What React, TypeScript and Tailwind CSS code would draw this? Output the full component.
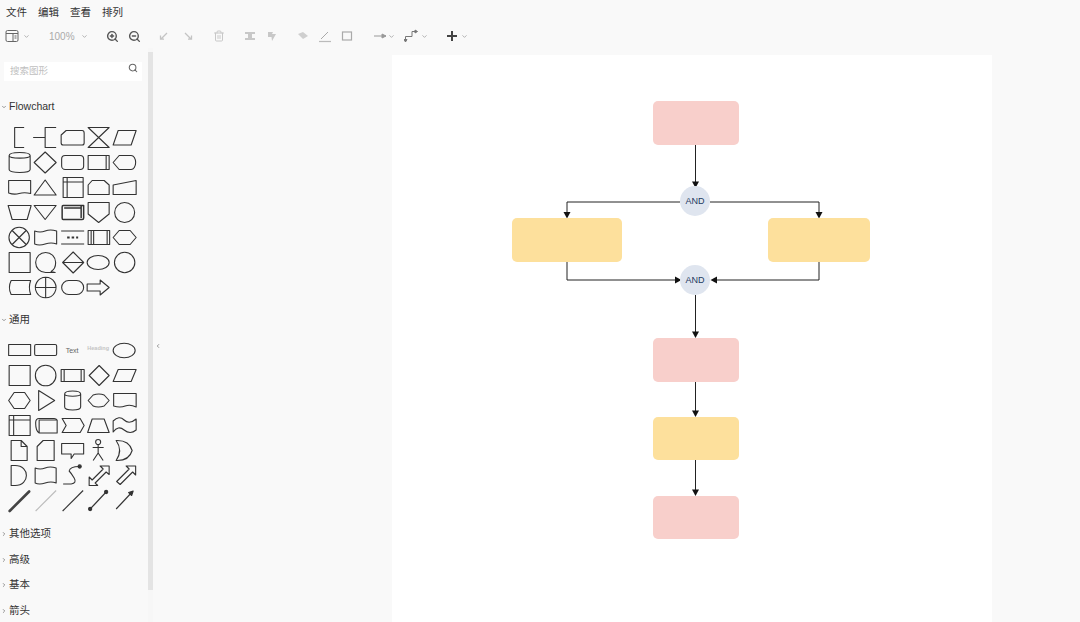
import React from "react";
import { ZoomIn, ZoomOut, Search, ChevronDown, ChevronRight, Trash2 } from "lucide-react";

const S = ({ children }: { children?: React.ReactNode }) => (
  <svg viewBox="0 0 26 25" className="w-[26.3px] h-[25px]" fill="none" stroke="#333" strokeWidth="1.1" strokeLinejoin="round">
    {children}
  </svg>
);

const flow: React.ReactNode[] = [
  <path d="M18 2.5H8.5V22.5H18" />,
  <path d="M1 12.5H13M24 2.5H13V22.5H24" />,
  <path d="M7 5.5H23Q25 5.5 25 8V18Q25 20 23 20H4Q2 20 2 18V10Z" />,
  <path d="M3 2.5H24L3 22.5H24Z" />,
  <path d="M7 5.5H25L20 20H2Z" />,

  <path d="M3 5.5C3 1.5 24 1.5 24 5.5V19.5C24 23.5 3 23.5 3 19.5ZM3 5.5C3 9 24 9 24 5.5" />,
  <path d="M13 2L24 12.5L13 23L2 12.5Z" />,
  <rect x="2.5" y="5.5" width="22" height="14" rx="3.5" />,
  <path d="M3 5.5H24V19.5H3ZM21 5.5V19.5" />,
  <path d="M2 12.5L8 5.5H20A4.5 7 0 0 1 20 19.5H8Z" />,

  <path d="M2.5 5.5H24.5V18.5Q18 17 13 18.5T2.5 18Z" />,
  <path d="M13 5L24 20H2Z" />,
  <path d="M4 2.5H24V22.5H4ZM8 2.5V22.5M4 7H24" />,
  <path d="M7 5.5H19L24 10V19.5H3V10Z" />,
  <path d="M2 10L25 5.5V19.5H2Z" />,

  <path d="M2 5.5H25L21 19.5H6Z" />,
  <path d="M2 5.5H24L13 19.5Z" />,
  <path d="M4 5.5H24.5V18Q24.5 19.5 23 19.5H4Q3 19.5 3 18V7Q3 5.5 4 5.5ZM5 8H22V18M22 5.5V18" strokeWidth="1.5" />,
  <path d="M3 2.5H24V14L13.5 22.5L3 14Z" />,
  <circle cx="13.5" cy="12.5" r="10" />,

  <g><circle cx="13" cy="12.5" r="10.2" /><path d="M6 5.5L20 19.5M20 5.5L6 19.5" strokeWidth="1.2" /></g>,
  <path d="M2.5 6Q8 8 13 6T24.5 6V19Q19 17 13 19T2.5 19Z" />,
  <g><path d="M2 6H25M2 19H25" /><path d="M8 12.5H19" strokeDasharray="2.5 2" strokeWidth="2" /></g>,
  <path d="M3 5.5H24.5V19.5H3ZM6 5.5V19.5M8.5 5.5V19.5M22 5.5V19.5" />,
  <path d="M2 12.5L8 5.5H19L25 12.5L19 19.5H8Z" />,

  <rect x="3" y="2.5" width="21" height="20" />,
  <path d="M13.5 22.5A10 10 0 1 1 23.5 12.5Q23.5 19 19 21.5L23 22.5Z" />,
  <path d="M14 2L24.5 12.5L14 23L3.5 12.5ZM3.5 12.5H24.5" />,
  <ellipse cx="13" cy="12.5" rx="11" ry="7" />,
  <circle cx="13.5" cy="12.5" r="10.2" />,

  <path d="M5 5.5H24.5Q22 12.5 24.5 19.5H5Q1.5 12.5 5 5.5Z" />,
  <path d="M13.5 2.2A10.3 10.3 0 1 0 13.6 2.2ZM13.5 2.2V22.8M3.2 12.5H23.8" />,
  <rect x="2.5" y="5.5" width="22" height="14" rx="7" />,
  <path d="M2 9H15V5L24 12.5L15 20V16H2Z" />,
];

const general: React.ReactNode[] = [
  <rect x="2.5" y="6.5" width="22" height="11" />,
  <rect x="2.5" y="6.5" width="22" height="11" rx="1.5" />,
  <text x="13" y="15" fontSize="7" textAnchor="middle" fill="#666" stroke="none" fontFamily="Liberation Sans, sans-serif">Text</text>,
  <text x="13" y="11.5" fontSize="5.5" fontWeight="700" textAnchor="middle" fill="#c4c4c4" stroke="none" fontFamily="Liberation Sans, sans-serif">Heading</text>,
  <ellipse cx="13" cy="12.5" rx="11" ry="7.2" />,

  <rect x="3" y="2.5" width="21" height="20" />,
  <circle cx="13.5" cy="12.5" r="10.3" />,
  <path d="M2 6.5H25V18.5H2ZM5 6.5V18.5M22 6.5V18.5" />,
  <path d="M14 2.5L24 12.5L14 22.5L4 12.5Z" />,
  <path d="M7 6.5H25L20 18.5H2Z" />,

  <path d="M2.5 12.5L8 4.500H18.5L24 12.5L18.5 20.5H8Z" />,
  <path d="M6.5 2.5L22.5 12.5L6.5 22.5Z" />,
  <path d="M5.5 6C5.5 2 21.5 2 21.5 6V19C21.5 23 5.5 23 5.5 19ZM5.5 6C5.5 9 21.5 9 21.5 6" />,
  <path d="M3 12.5L8 7Q14 5 19 7L24 12.5L19 18Q13 20 8 18Z" />,
  <path d="M2.5 5.5H25V19Q19 16 14 18T2.5 18Z" />,

  <path d="M3 2.5H24V22.5H3ZM7.5 2.5V22.5M3 7H24" />,
  <path d="M7 7H25V20H7ZM7 7V20M3.5 10Q3.5 5.5 7 5.5H22Q24 5.5 25 7M3.5 10Q3.5 18 7 20" />,
  <path d="M3 5.5H21L25 12.5L21 19.5H3L7 12.5Z" />,
  <path d="M7 6H19L24 19.5H2.5Z" />,
  <path d="M2 8Q8 2 13 7T25 6V17Q19 22 13 17T2 19Z" />,

  <path d="M5 2.5H15L21 8.5V22.5H5ZM15 2.5V8.5H21" />,
  <path d="M11 2.5H22V22.5H5V8.5Z" />,
  <path d="M2.5 5.5H24.5V16H15L12 20.5V16H2.5Z" />,
  <path d="M13 6.5A2.5 2.5 0 1 0 13 1.5A2.5 2.5 0 1 0 13 6.5ZM13 6.5V15M7.5 9.5H18.5M13 15L8 22.5M13 15L18 22.5" />,
  <path d="M5 2.5Q18 2 21 12.5Q18 23 5 22.5Q12 12.5 5 2.5Z" />,

  <path d="M5 2.5H9C24 2.5 24 22.5 9 22.5H5Z" />,
  <path d="M3 5Q8 7 13 5T24 5V20Q19 18 13 20T3 20Z" />,
  <g><path d="M4 21H12Q18 20 15 15T10 8Q11 3.5 20 3.5" /><circle cx="20.5" cy="3.5" r="1.6" fill="#333" /></g>,
  <path d="M4 22.5V14L7 17L18 6L15 3H24V11.5L21 9L10 20L12.5 22.5Z" />,
  <path d="M5.5 18.5L18 6L15 3H24.5V12L21.5 9L9 21.5Z" />,

  <path d="M3.5 23L23 3.5" stroke="#444" strokeWidth="2.6" strokeLinecap="round" />,
  <path d="M3.5 23L24 2.5" stroke="#bbb" />,
  <path d="M3.5 23L24 2.5" />,
  <g fill="#333"><path d="M5 21L21 4" /><circle cx="5" cy="21" r="1.6" /><circle cx="21" cy="4" r="1.6" /></g>,
  <g fill="#333"><path d="M5 21L21 4" /><path d="M22 3L20.5 7.5L17.5 4.5Z" /></g>,
];

const Caret = ({ className = "" }: { className?: string }) => (
  <ChevronDown size={7} strokeWidth={2.5} className={"text-[#999] " + className} />
);

const Ico = ({ children, ml }: { children: React.ReactNode; ml: string }) => (
  <div className={"flex items-center justify-center w-[14px] h-[14px] " + ml}>{children}</div>
);

const Toolbar = () => (
  <div className="flex items-center h-[24px] pl-[5px]">
    <Ico ml="">
      <svg viewBox="0 0 14 14" className="w-[14px] h-[14px]" fill="none" stroke="#666" strokeWidth="1">
        <rect x="1" y="1.5" width="12" height="11" rx="1.5" />
        <path d="M1 4.5H13M8 4.500V12.5M9.5 7H11.5M9.5 9H11.5" />
      </svg>
    </Ico>
    <Caret className="ml-[4px]" />
    <span className="ml-[19px] w-[27px] text-[10px] text-[#aaa]">100%</span>
    <Caret className="ml-[5px]" />
    <Ico ml="ml-[17px]"><ZoomIn size={13} strokeWidth={2.6} className="text-[#555]" /></Ico>
    <Ico ml="ml-[8px]"><ZoomOut size={13} strokeWidth={2.6} className="text-[#555]" /></Ico>
    <Ico ml="ml-[15px]">
      <svg viewBox="0 0 14 14" className="w-[14px] h-[14px]" fill="none" stroke="#c4c4c4" strokeWidth="1.3"><path d="M11 4L5 10M4.500 6.500V10.200H8" /></svg>
    </Ico>
    <Ico ml="ml-[12px]">
      <svg viewBox="0 0 14 14" className="w-[14px] h-[14px]" fill="none" stroke="#c4c4c4" strokeWidth="1.3"><path d="M3 4L9 10M9.5 6.500V10.200H6" /></svg>
    </Ico>
    <Ico ml="ml-[16px]"><Trash2 size={12} strokeWidth={2} className="text-[#c8c8c8]" /></Ico>
    <Ico ml="ml-[17px]">
      <svg viewBox="0 0 14 14" className="w-[14px] h-[14px]" fill="#c8c8c8"><path d="M2 3H12V5H2ZM2 9H12V11H2ZM5 5H9V9H5Z" /></svg>
    </Ico>
    <Ico ml="ml-[8px]">
      <svg viewBox="0 0 14 14" className="w-[14px] h-[14px]" fill="#c8c8c8"><path d="M3 3H8L7 5H11L7 12L6.5 8H3Z" /></svg>
    </Ico>
    <Ico ml="ml-[17px]">
      <svg viewBox="0 0 14 14" className="w-[14px] h-[14px]" fill="#cfcfcf"><path d="M2 5L7 3L12 7L7 10Z" /></svg>
    </Ico>
    <Ico ml="ml-[8px]">
      <svg viewBox="0 0 14 14" className="w-[14px] h-[14px]" fill="none" stroke="#aaa" strokeWidth="1"><path d="M3 10L10 3" /><path d="M1 12.5H13" stroke="#bbb" strokeWidth="1.2" /></svg>
    </Ico>
    <Ico ml="ml-[8px]">
      <svg viewBox="0 0 14 14" className="w-[14px] h-[14px]" fill="none" stroke="#aaa" strokeWidth="1.2"><rect x="2.5" y="3" width="9" height="8" /></svg>
    </Ico>
    <Ico ml="ml-[19px]">
      <svg viewBox="0 0 14 14" className="w-[14px] h-[14px]" fill="#999" stroke="#999" strokeWidth="1"><path d="M1 7H13" /><path d="M9 5L13 7L9 9Z" /></svg>
    </Ico>
    <Caret className="ml-[1px]" />
    <Ico ml="ml-[9px]">
      <svg viewBox="0 0 14 14" className="w-[14px] h-[14px]" fill="none" stroke="#777" strokeWidth="1"><path d="M1.500 12V7.500H8V2.500H12" /><path d="M11 1L13.500 2.500L11 4ZM0 10.500L1.500 13L3 10.500Z" fill="#777" /></svg>
    </Ico>
    <Caret className="ml-[3px]" />
    <Ico ml="ml-[17px]">
      <svg viewBox="0 0 14 14" className="w-[14px] h-[14px]" fill="none" stroke="#444" strokeWidth="2"><path d="M7 2V12M2 7H12" /></svg>
    </Ico>
    <Caret className="ml-[2px]" />
  </div>
);

const Section = ({ label, open, className = "" }: { label: string; open?: boolean; className?: string }) => (
  <div className={"flex items-center h-[16px] text-[10.5px] text-[#333] " + className}>
    {open ? (
      <ChevronDown size={6} strokeWidth={3} className="ml-[1px] text-[#777]" />
    ) : (
      <ChevronRight size={6} strokeWidth={3} className="ml-[1px] text-[#777]" />
    )}
    <span className="ml-[2px]">{label}</span>
  </div>
);

const ShapeGrid = ({ items, className = "" }: { items: React.ReactNode[]; className?: string }) => (
  <div className={"grid grid-cols-[repeat(5,26.3px)] auto-rows-[25px] pl-[6px] " + className}>
    {items.map((n, i) => (
      <S key={i}>{n}</S>
    ))}
  </div>
);

const Node = ({ c, x, y, w, h }: { c: string; x: string; y: string; w: string; h: string }) => (
  <div className={["absolute rounded-[5px]", c, x, y, w, h].join(" ")} />
);

const And = ({ y }: { y: string }) => (
  <div className={"absolute left-[288px] w-[30px] h-[30px] pt-[1px] rounded-full bg-[#dfe5ef] flex items-center justify-center text-[9px] text-[#1d3a5f] " + y}>
    AND
  </div>
);

export default function App() {
  return (
    <div className="w-[1080px] h-[622px] overflow-hidden flex flex-col bg-[#f9f9f9] font-['Liberation_Sans','Noto_Sans_CJK_SC',sans-serif]">
      <div className="flex items-center gap-[11px] h-[24px] pl-[6px] pt-[1px] text-[10.5px] text-[#333]">
        <span>文件</span>
        <span>编辑</span>
        <span>查看</span>
        <span>排列</span>
      </div>
      <Toolbar />
      <div className="flex-1 flex min-h-0">
        <div className="w-[148px] shrink-0 pt-[14px]">
          <div className="relative ml-[4px] w-[138px] h-[19px] bg-white flex items-center pl-[6px] text-[9.5px] text-[#c0c0c0]">
            搜索图形
            <Search size={10} strokeWidth={2.5} className="absolute right-[4px] top-[1px] text-[#666]" />
          </div>
          <Section label="Flowchart" open className="mt-[18px]" />
          <ShapeGrid items={flow} className="mt-[10px]" />
          <Section label="通用" open className="mt-[12px]" />
          <ShapeGrid items={general} className="mt-[10px]" />
          <Section label="其他选项" className="mt-[13px]" />
          <Section label="高级" className="mt-[9.5px]" />
          <Section label="基本" className="mt-[9.5px]" />
          <Section label="箭头" className="mt-[9.5px]" />
        </div>
        <div className="w-[5px] shrink-0 pt-[4px] bg-[#f7f7f7]">
          <div className="h-[538px] bg-[#e4e4e4]" />
        </div>
        <div className="relative flex-1 pl-[239px] pt-[7px]">
          <ChevronRight size={6} strokeWidth={3} className="absolute left-[2px] top-[295px] rotate-180 text-[#777]" />
          <div className="relative w-[600px] h-full bg-white">
            <svg className="absolute left-0 top-0 w-[600px] h-[567px]" viewBox="0 0 600 567" fill="none" stroke="#222" strokeWidth="1">
              <path d="M303.5 90V127M288 147H175V158M318 147H427V158M175 207V225H283M427 207V225H325M303.5 240V277M303.5 327V356M303.5 405V435" />
              <g fill="#111" stroke="none">
                <path d="M300 126.5H307L303.5 133Z" />
                <path d="M171.5 157H178.5L175 163.5Z" />
                <path d="M423.5 157H430.5L427 163.5Z" />
                <path d="M283 221.5V228.5L289.5 225Z" />
                <path d="M325 221.5V228.5L318.5 225Z" />
                <path d="M300 276.5H307L303.5 283Z" />
                <path d="M300 355.5H307L303.5 362Z" />
                <path d="M300 434.5H307L303.5 441Z" />
              </g>
            </svg>
            <Node c="bg-[#f8cfcb]" x="left-[261px]" y="top-[46px]" w="w-[86px]" h="h-[44px]" />
            <And y="top-[131px]" />
            <Node c="bg-[#fde09c]" x="left-[120px]" y="top-[163px]" w="w-[110px]" h="h-[44px]" />
            <Node c="bg-[#fde09c]" x="left-[376px]" y="top-[163px]" w="w-[102px]" h="h-[44px]" />
            <And y="top-[210px]" />
            <Node c="bg-[#f8cfcb]" x="left-[261px]" y="top-[283px]" w="w-[86px]" h="h-[44px]" />
            <Node c="bg-[#fde09c]" x="left-[261px]" y="top-[362px]" w="w-[86px]" h="h-[43px]" />
            <Node c="bg-[#f8cfcb]" x="left-[261px]" y="top-[441px]" w="w-[86px]" h="h-[43px]" />
          </div>
        </div>
      </div>
    </div>
  );
}
